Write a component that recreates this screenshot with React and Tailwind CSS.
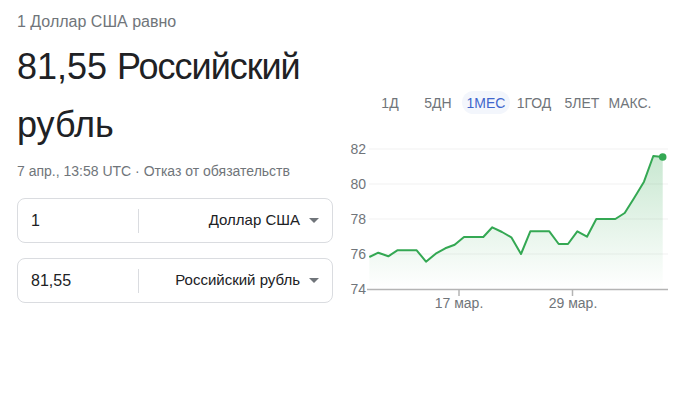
const TABS = ['1Д', '5ДН', '1МЕС', '1ГОД', '5ЛЕТ', 'МАКС.']

const POINTS = [
  [369.3, 257], [378.3, 252.7], [388.3, 256.3], [397.3, 250.3], [416.7, 250.3],
  [426, 261.7], [435.7, 253.7], [445.3, 248.3], [454.7, 244.7], [464, 237],
  [483.3, 237], [492.3, 227.3], [502, 232], [511.3, 237.3], [521, 254],
  [530.3, 231.3], [549.3, 231.3], [558.7, 244], [568, 244], [577.3, 231.3],
  [587, 236.7], [596.3, 219], [615.3, 219], [624.7, 213], [634.3, 197.7],
  [644, 181.7], [653.3, 156], [662.7, 157],
]

const Y_TICKS = [
  { label: '82', y: 149 },
  { label: '80', y: 184 },
  { label: '78', y: 219 },
  { label: '76', y: 254 },
]

const AXIS_FONT = "'Liberation Sans', Arial, sans-serif"

function CurrencyBox({ amount, currency, className = '' }) {
  return (
    <div
      className={`flex h-[45px] items-center rounded-lg border border-[#dadce0] ${className}`}
    >
      <div className="w-[120px] pl-[13px] text-base text-[#202124]">{amount}</div>
      <div className="h-6 w-px bg-[#dadce0]" />
      <div className="flex flex-1 items-center justify-end pr-[13px] text-[15px] text-[#202124]">
        <span>{currency}</span>
        <span className="ml-[9px] h-0 w-0 border-x-[5px] border-t-[5px] border-x-transparent border-t-[#70757a]" />
      </div>
    </div>
  )
}

function Chart() {
  const line = POINTS.map(([x, y]) => `${x},${y}`).join(' ')
  const area = `369.3,289 ${line} 662.7,289`
  return (
    <svg width="352" height="180" viewBox="340 135 352 180" className="block">
      <defs>
        <linearGradient id="fill" x1="0" y1="149" x2="0" y2="289" gradientUnits="userSpaceOnUse">
          <stop offset="0" stopColor="#34a853" stopOpacity="0.28" />
          <stop offset="1" stopColor="#34a853" stopOpacity="0" />
        </linearGradient>
      </defs>
      {Y_TICKS.map((tick) => (
        <g key={tick.label}>
          <line x1="369" x2="668" y1={tick.y} y2={tick.y} stroke="#f1f1f1" strokeWidth="1" />
          <text x="366" y={tick.y + 5} textAnchor="end" fontSize="14" fill="#70757a" fontFamily={AXIS_FONT}>
            {tick.label}
          </text>
        </g>
      ))}
      <text x="366" y="294" textAnchor="end" fontSize="14" fill="#70757a" fontFamily={AXIS_FONT}>
        74
      </text>
      <polygon points={area} fill="url(#fill)" />
      <polyline points={line} fill="none" stroke="#34a853" strokeWidth="2" strokeLinejoin="round" />
      <circle cx="662.7" cy="157" r="3.8" fill="#34a853" />
      <line x1="367" x2="668" y1="289.5" y2="289.5" stroke="#b4b4b4" strokeWidth="1.5" />
      <line x1="459" x2="459" y1="289" y2="296" stroke="#b4b4b4" strokeWidth="1.5" />
      <line x1="572.5" x2="572.5" y1="289" y2="296" stroke="#b4b4b4" strokeWidth="1.5" />
      <text x="459" y="308" textAnchor="middle" fontSize="14" fill="#70757a" fontFamily={AXIS_FONT}>
        17 мар.
      </text>
      <text x="573" y="308" textAnchor="middle" fontSize="14" fill="#70757a" fontFamily={AXIS_FONT}>
        29 мар.
      </text>
    </svg>
  )
}

export default function App() {
  return (
    <main className="flex h-[417px] w-[692px] bg-white font-['Liberation_Sans',Arial,sans-serif]">
      <section className="w-[340px] pl-[17px] pr-[7px] pt-3">
        <p className="text-base leading-5 text-[#70757a]">1 Доллар США равно</p>
        <h1 className="mt-[6px] text-[36px] leading-[58px] text-[#202124]">
          81,55 <span className="tracking-[-1px]">Российский</span> рубль
        </h1>
        <p className="mt-[7px] text-sm leading-5 text-[#70757a]">
          7 апр., 13:58 UTC · Отказ от обязательств
        </p>
        <CurrencyBox amount="1" currency="Доллар США" className="mt-[17px]" />
        <CurrencyBox amount="81,55" currency="Российский рубль" className="mt-[15px]" />
      </section>

      <section className="flex-1">
        <div className="ml-[26px] mt-[91px] flex">
          {TABS.map((tab) => (
            <div
              key={tab}
              className={`flex h-[23px] w-12 items-center justify-center rounded-full text-sm ${
                tab === '1МЕС' ? 'bg-[#f3f6fc] text-[#4066cc]' : 'text-[#70757a]'
              }`}
            >
              {tab}
            </div>
          ))}
        </div>
        <div className="mt-[21px]">
          <Chart />
        </div>
      </section>
    </main>
  )
}
